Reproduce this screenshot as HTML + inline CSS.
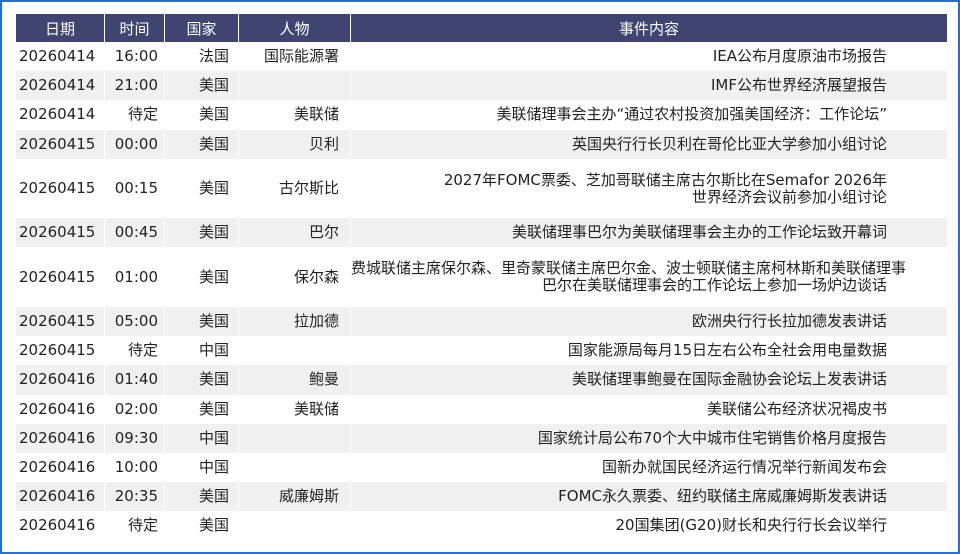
<!DOCTYPE html>
<html><head><meta charset="utf-8"><style>
html,body{margin:0;padding:0;}
body{width:956px;height:550px;border:2px solid #1f6fe0;background:#fff;position:relative;overflow:hidden;font-family:"DejaVu Sans","Noto Sans CJK SC",sans-serif;font-size:15px;color:#222;}
table{position:absolute;left:13px;top:12px;border-collapse:separate;border-spacing:1px 0;table-layout:fixed;width:933px;}
th{background:#3f4470;color:#fff;font-weight:normal;height:28px;padding:0;text-align:center;font-size:15px;}
td{height:29.2px;padding:0;white-space:nowrap;vertical-align:middle;line-height:17px;box-sizing:border-box;overflow:visible;}
tr:nth-child(even) td{background:#f0f0f0;}
td.t2{height:59.5px;}
td:nth-child(1){text-align:left;padding-left:3px;}
td:nth-child(2){text-align:right;padding-right:6px;}
td:nth-child(3){text-align:right;padding-right:9px;}
td:nth-child(4){text-align:right;padding-right:11px;}
td:nth-child(5){text-align:right;padding-right:60px;}
</style></head><body>
<table>
<colgroup><col style="width:88px"><col style="width:59px"><col style="width:73px"><col style="width:111px"><col style="width:596px"></colgroup>
<thead><tr><th>日期</th><th>时间</th><th>国家</th><th>人物</th><th>事件内容</th></tr></thead>
<tbody>
<tr><td>20260414</td><td>16:00</td><td>法国</td><td>国际能源署</td><td>IEA公布月度原油市场报告</td></tr>
<tr><td>20260414</td><td>21:00</td><td>美国</td><td></td><td>IMF公布世界经济展望报告</td></tr>
<tr><td>20260414</td><td>待定</td><td>美国</td><td>美联储</td><td>美联储理事会主办“通过农村投资加强美国经济：工作论坛”</td></tr>
<tr><td>20260415</td><td>00:00</td><td>美国</td><td>贝利</td><td>英国央行行长贝利在哥伦比亚大学参加小组讨论</td></tr>
<tr><td class="t2">20260415</td><td class="t2">00:15</td><td class="t2">美国</td><td class="t2">古尔斯比</td><td class="t2">2027年FOMC票委、芝加哥联储主席古尔斯比在Semafor 2026年<br>世界经济会议前参加小组讨论</td></tr>
<tr><td>20260415</td><td>00:45</td><td>美国</td><td>巴尔</td><td>美联储理事巴尔为美联储理事会主办的工作论坛致开幕词</td></tr>
<tr><td class="t2">20260415</td><td class="t2">01:00</td><td class="t2">美国</td><td class="t2">保尔森</td><td class="t2">费城联储主席保尔森、里奇蒙联储主席巴尔金、波士顿联储主席柯林斯和美联储理事<br>巴尔在美联储理事会的工作论坛上参加一场炉边谈话</td></tr>
<tr><td>20260415</td><td>05:00</td><td>美国</td><td>拉加德</td><td>欧洲央行行长拉加德发表讲话</td></tr>
<tr><td>20260415</td><td>待定</td><td>中国</td><td></td><td>国家能源局每月15日左右公布全社会用电量数据</td></tr>
<tr><td>20260416</td><td>01:40</td><td>美国</td><td>鲍曼</td><td>美联储理事鲍曼在国际金融协会论坛上发表讲话</td></tr>
<tr><td>20260416</td><td>02:00</td><td>美国</td><td>美联储</td><td>美联储公布经济状况褐皮书</td></tr>
<tr><td>20260416</td><td>09:30</td><td>中国</td><td></td><td>国家统计局公布70个大中城市住宅销售价格月度报告</td></tr>
<tr><td>20260416</td><td>10:00</td><td>中国</td><td></td><td>国新办就国民经济运行情况举行新闻发布会</td></tr>
<tr><td>20260416</td><td>20:35</td><td>美国</td><td>威廉姆斯</td><td>FOMC永久票委、纽约联储主席威廉姆斯发表讲话</td></tr>
<tr><td>20260416</td><td>待定</td><td>美国</td><td></td><td>20国集团(G20)财长和央行行长会议举行</td></tr>
</tbody></table>
</body></html>
